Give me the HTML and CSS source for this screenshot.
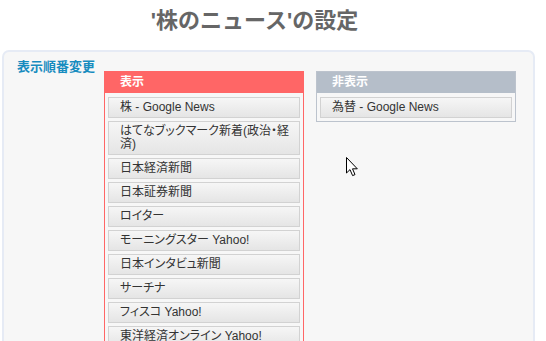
FILE: index.html
```html
<!DOCTYPE html>
<html lang="ja">
<head>
    <meta charset="UTF-8">
    <title>株のニュースの設定</title>
    <link rel="stylesheet" href="styles.css">
</head>
<body>

    <h1 class="title">'株のニュース'の設定</h1>

    <div class="panel">
        <div class="label">表示順番変更</div>
        <div class="columns">
            <div class="col show">
                <div class="colHead">表示</div>
                <ul class="list">
                    <li>株 - Google News</li>
                    <li>はてなブックマーク新着(政治・経済)</li>
                    <li>日本経済新聞</li>
                    <li>日本証券新聞</li>
                    <li>ロイター</li>
                    <li>モーニングスター Yahoo!</li>
                    <li>日本インタビュ新聞</li>
                    <li>サーチナ</li>
                    <li>フィスコ Yahoo!</li>
                    <li>東洋経済オンライン Yahoo!</li>
                </ul>
            </div>
            <div class="col hide">
                <div class="colHead">非表示</div>
                <ul class="list">
                    <li>為替 - Google News</li>
                </ul>
            </div>
        </div>

        <svg class="cursor" width="13" height="20" viewBox="0 0 13 20">
            <path d="M0.5 0.5 L0.5 16 L4 12.6 L6.6 18.6 L9 17.6 L6.5 11.8 L11.3 11.8 Z" fill="#fff" stroke="#000" stroke-width="1"/>
        </svg>
    </div>

</body>
</html>
```

FILE: styles.css
```css
html, body {
    margin: 0;
    padding: 0;
    background: #fff;
}
body {
    font-family: "Liberation Sans", "Noto Sans CJK JP", sans-serif;
    font-size: 12px;
    font-feature-settings: "palt";
    color: #333;
    overflow: hidden;
}
.title {
    width: 509px;
    margin: 0;
    padding-top: 7px;
    line-height: 28px;
    font-size: 22px;
    font-weight: bold;
    font-feature-settings: normal;
    color: #666;
    text-align: center;
}
.panel {
    position: relative;
    margin: 15px 11px 0 2px;
    height: 320px;
    background: #f7f7f7;
    border: 2px solid #e6ebf5;
    border-bottom: none;
    border-radius: 7px 7px 0 0;
    display: flex;
    padding: 7px 0 0 13px;
}
.label {
    width: 87px;
    flex: none;
    font-size: 13px;
    line-height: 16px;
    font-weight: bold;
    font-feature-settings: normal;
    color: #178cbf;
}
.columns {
    display: flex;
    align-items: flex-start;
    gap: 12px;
    margin-top: 12px;
}
.col {
    width: 192px;
    border: 1px solid;
    padding: 0 3px 3px;
}
.col.show {
    border-color: #ff6666;
    padding-bottom: 40px;
}
.col.hide {
    border-color: #bcc3cd;
}
.colHead {
    margin: 0 -3px;
    padding-left: 15px;
    line-height: 21px;
    font-weight: bold;
    color: #fff;
}
.show .colHead {
    background: #ff6666;
}
.hide .colHead {
    background: #b5bec9;
}
.list {
    list-style: none;
    margin: 0;
    padding: 4px 0 0;
}
.list li {
    margin-bottom: 3px;
    padding: 3px 4px 3px 11px;
    line-height: 13px;
    border: 1px solid #d2d2d2;
    background: linear-gradient(#f6f6f6, #e5e5e5);
    color: #333;
}
.list li:last-child {
    margin-bottom: 0;
}
.cursor {
    position: absolute;
    left: 342px;
    top: 105px;
}
```
